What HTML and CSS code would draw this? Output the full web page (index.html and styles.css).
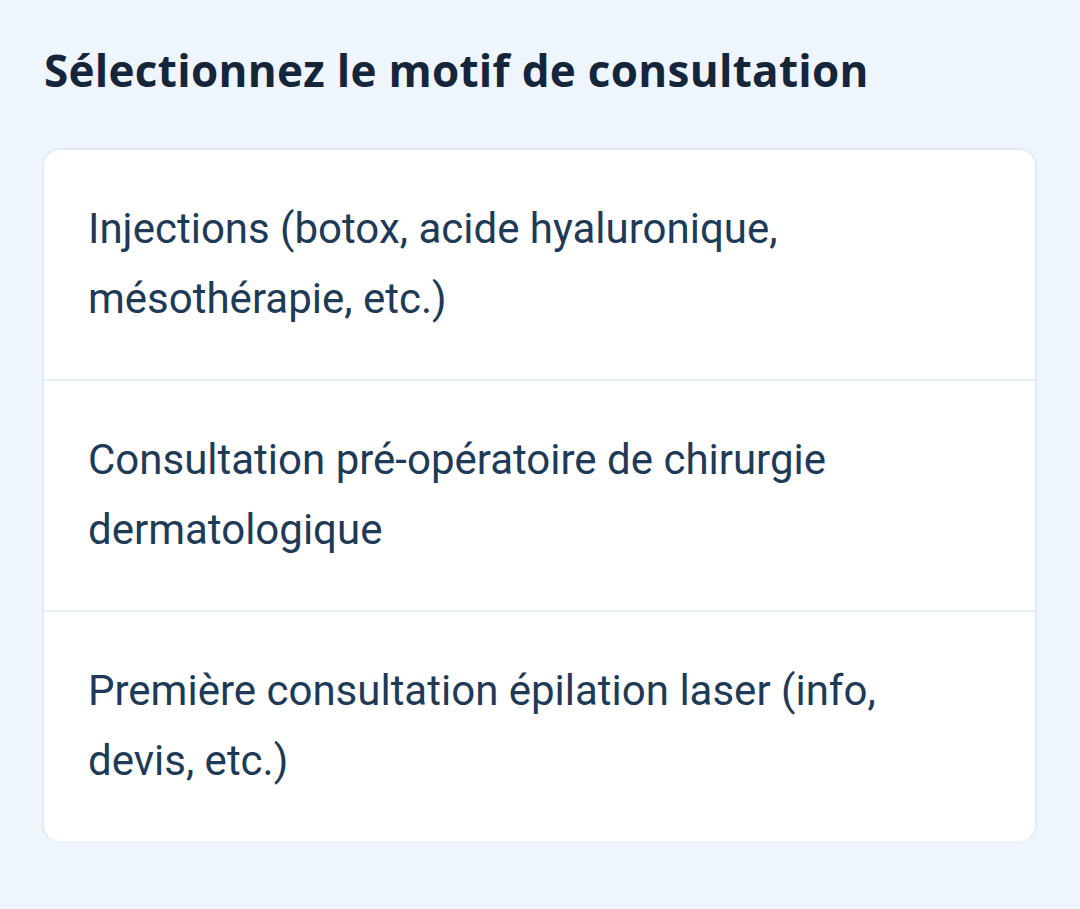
FILE: index.html
```html
<!DOCTYPE html>
<html lang="fr">
<head>
<meta charset="utf-8">
<link rel="stylesheet" href="styles.css">
</head>
<body>
<main class="page">
  <h1 class="title">Sélectionnez le motif de consultation</h1>
  <div class="card">
    <div class="row">Injections (botox, acide hyaluronique, mésothérapie, etc.)</div>
    <div class="row">Consultation pré-opératoire de chirurgie dermatologique</div>
    <div class="row">Première consultation épilation laser (info, devis, etc.)</div>
  </div>
</main>
</body>
</html>
```

FILE: styles.css
```css
html, body {
  margin: 0;
  padding: 0;
  background: #eff5fd;
}
.page {
  padding: 40px 43px 0 42px;
  width: 995px;
}
.title {
  margin: 0 0 0 2px;
  font-family: "Open Sans", "Noto Sans", sans-serif;
  font-weight: 700;
  font-size: 44px;
  line-height: 60px;
  color: #16263a;
  letter-spacing: 0.3px;
}
.card {
  margin-top: 48px;
  background: #ffffff;
  border: 2px solid #e3ebf4;
  border-bottom-color: #eef3f9;
  border-radius: 18px;
  overflow: hidden;
}
.row {
  padding: 44px 43px 45px 44px;
  font-family: Roboto, "Liberation Sans", sans-serif;
  font-size: 42px;
  line-height: 70px;
  color: #1e3a56;
  border-top: 2px solid #e6eef6;
}
.row:first-child {
  border-top: none;
}
```
